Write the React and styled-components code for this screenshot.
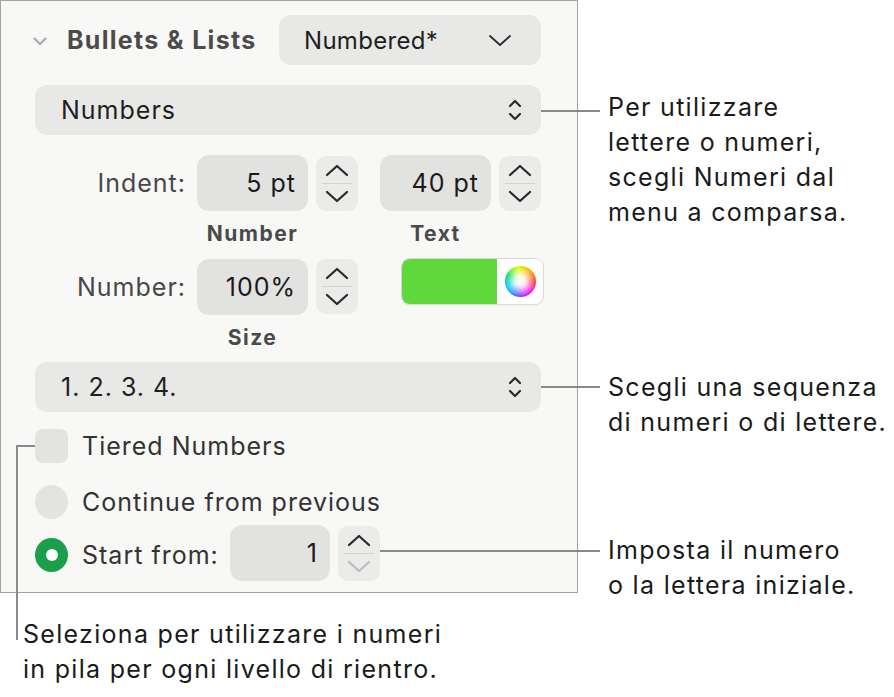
import React from "react";
import styled, { createGlobalStyle } from "styled-components";

const Global = createGlobalStyle`
  html, body { margin: 0; padding: 0; background: #ffffff; }
  body { font-family: Inter, "Noto Sans", "Liberation Sans", sans-serif; -webkit-font-smoothing: antialiased; }
  * { box-sizing: border-box; }
`;

const Page = styled.div`
  position: relative;
  width: 894px;
  height: 697px;
  background: #ffffff;
`;

const Panel = styled.div`
  width: 578px;
  height: 593px;
  border: 1px solid #a3a3a3;
  background: #f8f8f7;
  padding: 14px 36px 0 34px;
  display: flex;
  flex-direction: column;
`;

const Header = styled.div`
  display: flex;
  align-items: center;
  height: 50px;
`;

const Disclosure = styled.svg`
  width: 14px;
  height: 9px;
  margin-left: -2px;
  margin-top: 2px;
`;

const Title = styled.div`
  margin-left: 20px;
  font-size: 25px;
  font-weight: 700;
  color: #4b4b4b;
  letter-spacing: 1.3px;
`;

const PopupButton = styled.div`
  margin-left: ${(p) => (p.$auto ? "auto" : "0")};
  margin-top: ${(p) => p.$mt || 0}px;
  width: ${(p) => (p.$w ? `${p.$w}px` : "auto")};
  height: 50px;
  border-radius: 12px;
  background: #e8e8e7;
  display: flex;
  align-items: center;
  justify-content: space-between;
  padding: ${(p) => p.$pad};
  font-size: ${(p) => p.$fs || 25}px;
  letter-spacing: ${(p) => p.$ls ?? 1}px;
  color: #1f1f1f;
  flex-shrink: 0;
`;

const Grid = styled.div`
  margin-top: 20px;
  display: grid;
  grid-template-columns: 162px 111px 72px 111px 50px;
  grid-template-rows: 56px 47px 57px 47px;
  align-items: center;
`;

const RowLabel = styled.div`
  justify-self: end;
  padding-right: 11px;
  font-size: 25px;
  letter-spacing: 1px;
  color: #474747;
`;

const Field = styled.div`
  width: ${(p) => p.$w}px;
  height: 56px;
  border-radius: 12px;
  background: #e2e2e1;
  display: flex;
  align-items: center;
  justify-content: flex-end;
  padding-right: 12px;
  font-size: 25px;
  letter-spacing: 1px;
  color: #1a1a1a;
  flex-shrink: 0;
`;

const StepperBox = styled.div`
  width: 42px;
  height: 55px;
  border-radius: 10px;
  background: #ebebea;
  display: flex;
  flex-direction: column;
  align-items: center;
  justify-content: space-between;
  padding: 8px 0 8px;
  justify-self: ${(p) => p.$js || "start"};
  margin-left: ${(p) => p.$ml || 0}px;
  flex-shrink: 0;
`;

const StepSep = styled.div`
  width: 30px;
  height: 1px;
  background: #d2d2d1;
`;

const SubLabel = styled.div`
  justify-self: center;
  font-size: 21px;
  font-weight: 700;
  letter-spacing: 1.5px;
  color: #4a4a4a;
  margin-top: -2px;
`;

const ColorWell = styled.div`
  grid-column: 4 / 6;
  justify-self: end;
  margin-right: -2px;
  margin-top: -10px;
  width: 141px;
  height: 45px;
  border-radius: 8px;
  overflow: hidden;
  display: flex;
  box-shadow: 0 0 0 1px #d9d9d9, 0 1px 2px rgba(0, 0, 0, 0.12);
`;

const Swatch = styled.div`
  flex: 0 0 95px;
  background: #5ed83a;
`;

const WheelArea = styled.div`
  flex: 1;
  background: #ffffff;
  display: flex;
  align-items: center;
  justify-content: center;
`;

const Wheel = styled.div`
  width: 31px;
  height: 31px;
  border-radius: 50%;
  background:
    radial-gradient(circle, rgba(255,255,255,1) 0%, rgba(255,255,255,0.85) 25%, rgba(255,255,255,0) 70%),
    conic-gradient(from 90deg, #ff3b30, #ff00ff, #5856ff, #00c8ff, #00e070, #d8ff00, #ffb000, #ff3b30);
`;

const OptionRow = styled.div`
  display: flex;
  align-items: center;
  height: ${(p) => p.$h}px;
  margin-top: ${(p) => p.$mt}px;
`;

const CheckBox = styled.div`
  width: 33px;
  height: 34px;
  border-radius: 8px;
  background: #e3e3e2;
  flex-shrink: 0;
`;

const Radio = styled.div`
  width: 33px;
  height: 34px;
  border-radius: 50%;
  background: ${(p) => (p.$on ? "#1b9f4b" : "#e3e3e2")};
  display: flex;
  align-items: center;
  justify-content: center;
  flex-shrink: 0;
  margin-top: ${(p) => p.$mt || 0}px;
`;

const RadioDot = styled.div`
  width: 12px;
  height: 12px;
  border-radius: 50%;
  background: #ffffff;
`;

const OptionText = styled.div`
  margin-left: 14px;
  font-size: 25px;
  letter-spacing: 1px;
  color: #333333;
  width: ${(p) => (p.$w ? `${p.$w}px` : "auto")};
  margin-top: ${(p) => p.$mt || 0}px;
  flex-shrink: 0;
`;

const Callout = styled.div`
  position: absolute;
  left: ${(p) => p.$x}px;
  top: ${(p) => p.$y}px;
  font-size: 25px;
  letter-spacing: 1.3px;
  line-height: 35px;
  color: #1a1a1a;
  white-space: nowrap;
`;

const HLine = styled.div`
  position: absolute;
  left: ${(p) => p.$x}px;
  top: ${(p) => p.$y}px;
  width: ${(p) => p.$w}px;
  height: 2px;
  background: #8a8a8a;
`;

const VLine = styled.div`
  position: absolute;
  left: ${(p) => p.$x}px;
  top: ${(p) => p.$y}px;
  width: 2px;
  height: ${(p) => p.$h}px;
  background: #8a8a8a;
`;

const Chevron = ({ dir = "down", color = "#2b2b2b", w = 24, h = 13, sw = 2.3 }) => (
  <svg width={w} height={h} viewBox="0 0 24 13" fill="none">
    {dir === "down" ? (
      <path d="M2 2 L12 11 L22 2" stroke={color} strokeWidth={sw} strokeLinecap="round" strokeLinejoin="round" />
    ) : (
      <path d="M2 11 L12 2 L22 11" stroke={color} strokeWidth={sw} strokeLinecap="round" strokeLinejoin="round" />
    )}
  </svg>
);

const UpDown = () => (
  <svg width="14" height="24" viewBox="0 0 14 24" fill="none">
    <path d="M2 8 L7 3 L12 8" stroke="#2b2b2b" strokeWidth="2.2" strokeLinecap="round" strokeLinejoin="round" />
    <path d="M2 16 L7 21 L12 16" stroke="#2b2b2b" strokeWidth="2.2" strokeLinecap="round" strokeLinejoin="round" />
  </svg>
);

const Stepper = ({ js, ml, downDisabled }) => (
  <StepperBox $js={js} $ml={ml}>
    <Chevron dir="up" />
    <StepSep />
    <Chevron dir="down" color={downDisabled ? "#bdbdbd" : "#2b2b2b"} />
  </StepperBox>
);

export default function App() {
  return (
    <>
      <Global />
      <Page>
        <Panel>
          <Header>
            <Disclosure viewBox="0 0 14 9" fill="none">
              <path d="M1.5 1.5 L7 7 L12.5 1.5" stroke="#a9a9a9" strokeWidth="2.2" strokeLinecap="round" strokeLinejoin="round" />
            </Disclosure>
            <Title>Bullets &amp; Lists</Title>
            <PopupButton $auto $w={262} $pad="0 29px 0 25px" $fs={24} $ls={0.3}>
              <span>Numbered*</span>
              <Chevron dir="down" sw={1.8} />
            </PopupButton>
          </Header>

          <PopupButton $mt={20} $pad="0 19px 0 26px">
            <span>Numbers</span>
            <UpDown />
          </PopupButton>

          <Grid>
            <RowLabel>Indent:</RowLabel>
            <Field $w={111}>5 pt</Field>
            <Stepper ml={8} />
            <Field $w={111}>40 pt</Field>
            <Stepper js="end" />

            <div />
            <SubLabel>Number</SubLabel>
            <div />
            <SubLabel>Text</SubLabel>
            <div />

            <RowLabel>Number:</RowLabel>
            <Field $w={111}>100%</Field>
            <Stepper ml={8} />
            <ColorWell>
              <Swatch />
              <WheelArea>
                <Wheel />
              </WheelArea>
            </ColorWell>

            <div />
            <SubLabel>Size</SubLabel>
          </Grid>

          <PopupButton $pad="0 19px 0 26px">
            <span>1. 2. 3. 4.</span>
            <UpDown />
          </PopupButton>

          <OptionRow $h={34} $mt={17}>
            <CheckBox />
            <OptionText>Tiered Numbers</OptionText>
          </OptionRow>

          <OptionRow $h={34} $mt={22}>
            <Radio />
            <OptionText>Continue from previous</OptionText>
          </OptionRow>

          <OptionRow $h={56} $mt={6}>
            <Radio $on $mt={4}>
              <RadioDot />
            </Radio>
            <OptionText $w={148} $mt={4}>Start from:</OptionText>
            <Field $w={100}>1</Field>
            <Stepper ml={8} downDisabled />
          </OptionRow>
        </Panel>

        <HLine $x={541} $y={110} $w={59} />
        <Callout $x={608} $y={90}>
          Per utilizzare
          <br />
          lettere o numeri,
          <br />
          scegli Numeri dal
          <br />
          menu a comparsa.
        </Callout>

        <HLine $x={541} $y={386} $w={59} />
        <Callout $x={608} $y={370}>
          Scegli una sequenza
          <br />
          di numeri o di lettere.
        </Callout>

        <HLine $x={380} $y={550} $w={220} />
        <Callout $x={608} $y={533}>
          Imposta il numero
          <br />
          o la lettera iniziale.
        </Callout>

        <HLine $x={16} $y={445} $w={19} />
        <VLine $x={16} $y={445} $h={195} />
        <Callout $x={23} $y={617}>
          Seleziona per utilizzare i numeri
          <br />
          in pila per ogni livello di rientro.
        </Callout>
      </Page>
    </>
  );
}
